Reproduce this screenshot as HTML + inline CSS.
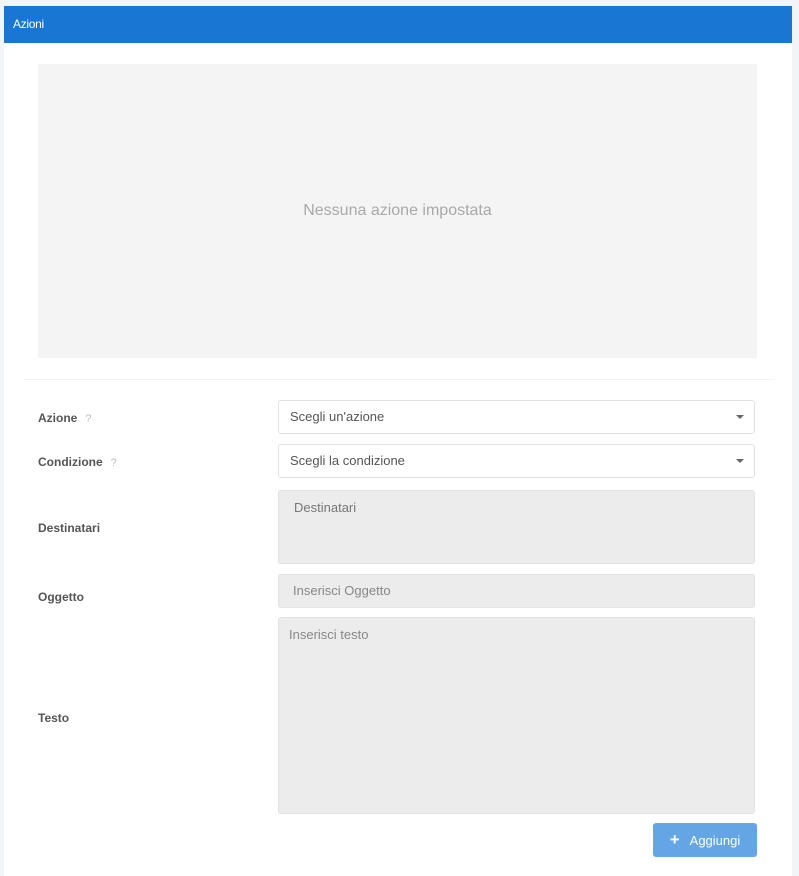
<!DOCTYPE html><html><head><style>
body{margin:0;background:#f3f4f7;font-family:"Liberation Sans",sans-serif;width:799px;height:865px;overflow:hidden;position:relative}
.panel{position:absolute;left:4px;top:6px;width:788px;height:870px;background:#fff}
.hd{height:37px;background:#1976d2;color:#fff;font-size:12px;line-height:37px;padding-left:9px;letter-spacing:-0.3px}
.empty{position:absolute;left:34px;top:58px;width:719px;height:294px;background:#f4f4f4;color:#a9a9a9;font-size:16px;text-align:center;line-height:294px}
.hr{position:absolute;left:20px;top:373px;width:751px;border-top:1px solid #f2f2f2}
.lbl{position:absolute;left:34px;font-size:12px;font-weight:bold;color:#555}
.lbl i{font-style:normal;color:#bbb;font-weight:normal;margin-left:8px;font-size:11px}
.f{position:absolute;left:274px;width:477px;border:1px solid #e2e2e2;border-radius:3px;font-size:13px;color:#555;padding-left:11px;box-sizing:border-box}
.g{background:#ececec;color:#888}
.car{position:absolute;right:10px;top:14px;border:4px solid transparent;border-top:4px solid #666;border-bottom:0}
.btn{position:absolute;left:649px;top:817px;width:104px;height:34px;background:#64a6e5;border-radius:3px;color:#fff;font-size:13px;line-height:34px;text-align:center}
</style></head><body><div class="panel">
<div class="hd">Azioni</div>
<div class="empty">Nessuna azione impostata</div>
<div class="hr"></div>
<div class="lbl" style="top:405px">Azione<i>?</i></div>
<div class="f" style="top:394px;height:34px;line-height:32px">Scegli un'azione<span class="car"></span></div>
<div class="lbl" style="top:449px">Condizione<i>?</i></div>
<div class="f" style="top:438px;height:34px;line-height:32px">Scegli la condizione<span class="car"></span></div>
<div class="lbl" style="top:515px">Destinatari</div>
<div class="f g" style="top:484px;height:74px;padding:9px 15px;color:#777">Destinatari</div>
<div class="lbl" style="top:584px">Oggetto</div>
<div class="f g" style="top:568px;height:34px;line-height:32px;padding-left:14px">Inserisci Oggetto</div>
<div class="lbl" style="top:705px">Testo</div>
<div class="f g" style="top:611px;height:197px;padding:9px 10px">Inserisci testo</div>
<div class="btn"><b style="font-size:17px;margin-right:10px">+</b>Aggiungi</div>
</div></body></html>
